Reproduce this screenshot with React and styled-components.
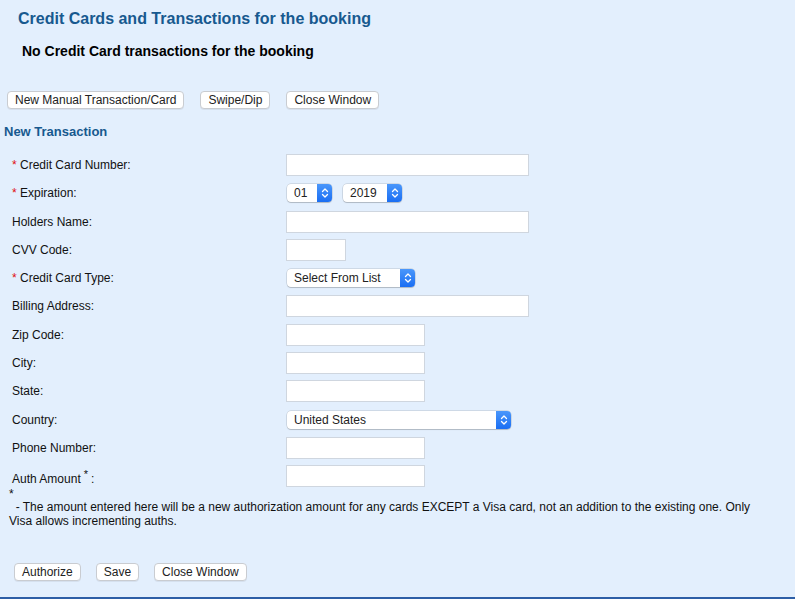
import React from "react";
import styled, { createGlobalStyle } from "styled-components";

const Global = createGlobalStyle`
  html, body { margin: 0; padding: 0; }
  body {
    background: #e3effd;
    font-family: "Liberation Sans", Arial, Helvetica, sans-serif;
    font-size: 12px;
    color: #111;
  }
`;

const Page = styled.div`
  width: 795px;
  height: 599px;
  box-sizing: border-box;
  background: #e3effd;
  border-bottom: 2px solid #2d5ea6;
  display: flex;
  flex-direction: column;
  overflow: hidden;
`;

const Title = styled.h1`
  margin: 9px 0 0 18px;
  font-size: 16px;
  line-height: 19px;
  font-weight: bold;
  color: #17598f;
`;

const Notice = styled.p`
  margin: 15px 0 0 22px;
  font-size: 14px;
  line-height: 17px;
  font-weight: bold;
  color: #000;
`;

const ButtonRow = styled.div`
  display: flex;
  gap: ${(p) => p.$gap || 16}px;
  margin: ${(p) => p.$margin};
`;

const Button = styled.button`
  height: 18px;
  padding: 0 7px;
  background: #fff;
  border: 1px solid #c9ccd1;
  border-radius: 4px;
  box-shadow: 0 1px 0 rgba(0, 0, 0, 0.06);
  font-family: "Liberation Sans", Arial, Helvetica, sans-serif;
  font-size: 12px;
  line-height: 16px;
  color: #222;
  cursor: pointer;
`;

const Section = styled.h2`
  margin: 15px 0 0 4px;
  font-size: 13px;
  line-height: 16px;
  font-weight: bold;
  color: #17598f;
`;

const Form = styled.div`
  display: grid;
  grid-template-columns: 278px 1fr;
  grid-auto-rows: 28.27px;
  align-items: center;
  margin: 11px 0 0 8px;
`;

const Label = styled.label`
  display: flex;
  align-items: baseline;
  font-size: 12px;
  color: #111;
  padding-left: 4px;
  padding-top: ${(p) => (p.$low ? 5 : 0)}px;
`;

const Star = styled.span`
  color: #e01010;
  width: 8px;
  font-size: 12px;
`;

const Sup = styled.sup`
  font-size: 11px;
  line-height: 0;
  position: relative;
  top: -5px;
  margin: 0 3px 0 3px;
`;

const Field = styled.div`
  display: flex;
  align-items: center;
  gap: 10px;
`;

const Input = styled.input`
  box-sizing: border-box;
  width: ${(p) => p.$w}px;
  height: 22px;
  border: 1px solid #cfd6df;
  background: #fff;
  padding: 0 4px;
  font-family: inherit;
  font-size: 12px;
  outline: none;
`;

const SelectBox = styled.div`
  box-sizing: border-box;
  width: ${(p) => p.$w}px;
  height: 18px;
  display: flex;
  align-items: stretch;
  background: #fff;
  border-radius: 4px;
  box-shadow: 0 0 0 0.5px rgba(0, 0, 0, 0.18), 0 1px 1px rgba(0, 0, 0, 0.15);
  overflow: hidden;
  margin-left: 1px;
`;

const SelectText = styled.span`
  flex: 1;
  padding-left: 7px;
  font-size: 12px;
  line-height: 18px;
  color: #222;
  white-space: nowrap;
`;

const Arrow = styled.span`
  width: 15px;
  background: linear-gradient(#4a97fb, #1a6ef3);
  display: flex;
  align-items: center;
  justify-content: center;
`;

const Footnote = styled.div`
  width: 758px;
  margin: -2px 0 0 9px;
  font-size: 12px;
  line-height: 14px;
  color: #111;
`;

const FootStar = styled.div`
  line-height: 12px;
  height: 12px;
  font-size: 12px;
`;

function Select({ w, value }) {
  return (
    <SelectBox $w={w}>
      <SelectText>{value}</SelectText>
      <Arrow>
        <svg width="8" height="12" viewBox="0 0 8 12" fill="none" stroke="#fff" strokeWidth="1.3" strokeLinecap="round" strokeLinejoin="round">
          <path d="M1.5 4.5 L4 2 L6.5 4.5" />
          <path d="M1.5 7.5 L4 10 L6.5 7.5" />
        </svg>
      </Arrow>
    </SelectBox>
  );
}

const rows = [
  { label: "Credit Card Number:", req: true, field: <Input $w={243} /> },
  {
    label: "Expiration:",
    req: true,
    field: (
      <>
        <Select w={45} value="01" />
        <Select w={59} value="2019" />
      </>
    ),
  },
  { label: "Holders Name:", field: <Input $w={243} /> },
  { label: "CVV Code:", field: <Input $w={60} /> },
  { label: "Credit Card Type:", req: true, field: <Select w={128} value="Select From List" /> },
  { label: "Billing Address:", field: <Input $w={243} /> },
  { label: "Zip Code:", field: <Input $w={139} /> },
  { label: "City:", field: <Input $w={139} /> },
  { label: "State:", field: <Input $w={139} /> },
  { label: "Country:", field: <Select w={224} value="United States" /> },
  { label: "Phone Number:", field: <Input $w={139} /> },
  { label: "Auth Amount", sup: true, field: <Input $w={139} /> },
];

export default function App() {
  return (
    <>
      <Global />
      <Page>
        <Title>Credit Cards and Transactions for the booking</Title>
        <Notice>No Credit Card transactions for the booking</Notice>
        <ButtonRow $margin="31px 0 0 7px" $gap={16}>
          <Button>New Manual Transaction/Card</Button>
          <Button>Swipe/Dip</Button>
          <Button>Close Window</Button>
        </ButtonRow>
        <Section>New Transaction</Section>
        <Form>
          {rows.map((r, i) => (
            <React.Fragment key={i}>
              <Label $low={r.sup}>
                {r.req ? <Star>*</Star> : null}
                {r.label}
                {r.sup ? (
                  <>
                    <Sup>*</Sup>:
                  </>
                ) : null}
              </Label>
              <Field>{r.field}</Field>
            </React.Fragment>
          ))}
        </Form>
        <Footnote>
          <FootStar>*</FootStar>
          &nbsp;&nbsp;- The amount entered here will be a new authorization amount for any cards EXCEPT a Visa card, not an addition to the existing one. Only Visa allows incrementing auths.
        </Footnote>
        <ButtonRow $margin="35px 0 0 14px" $gap={15}>
          <Button>Authorize</Button>
          <Button>Save</Button>
          <Button>Close Window</Button>
        </ButtonRow>
      </Page>
    </>
  );
}
